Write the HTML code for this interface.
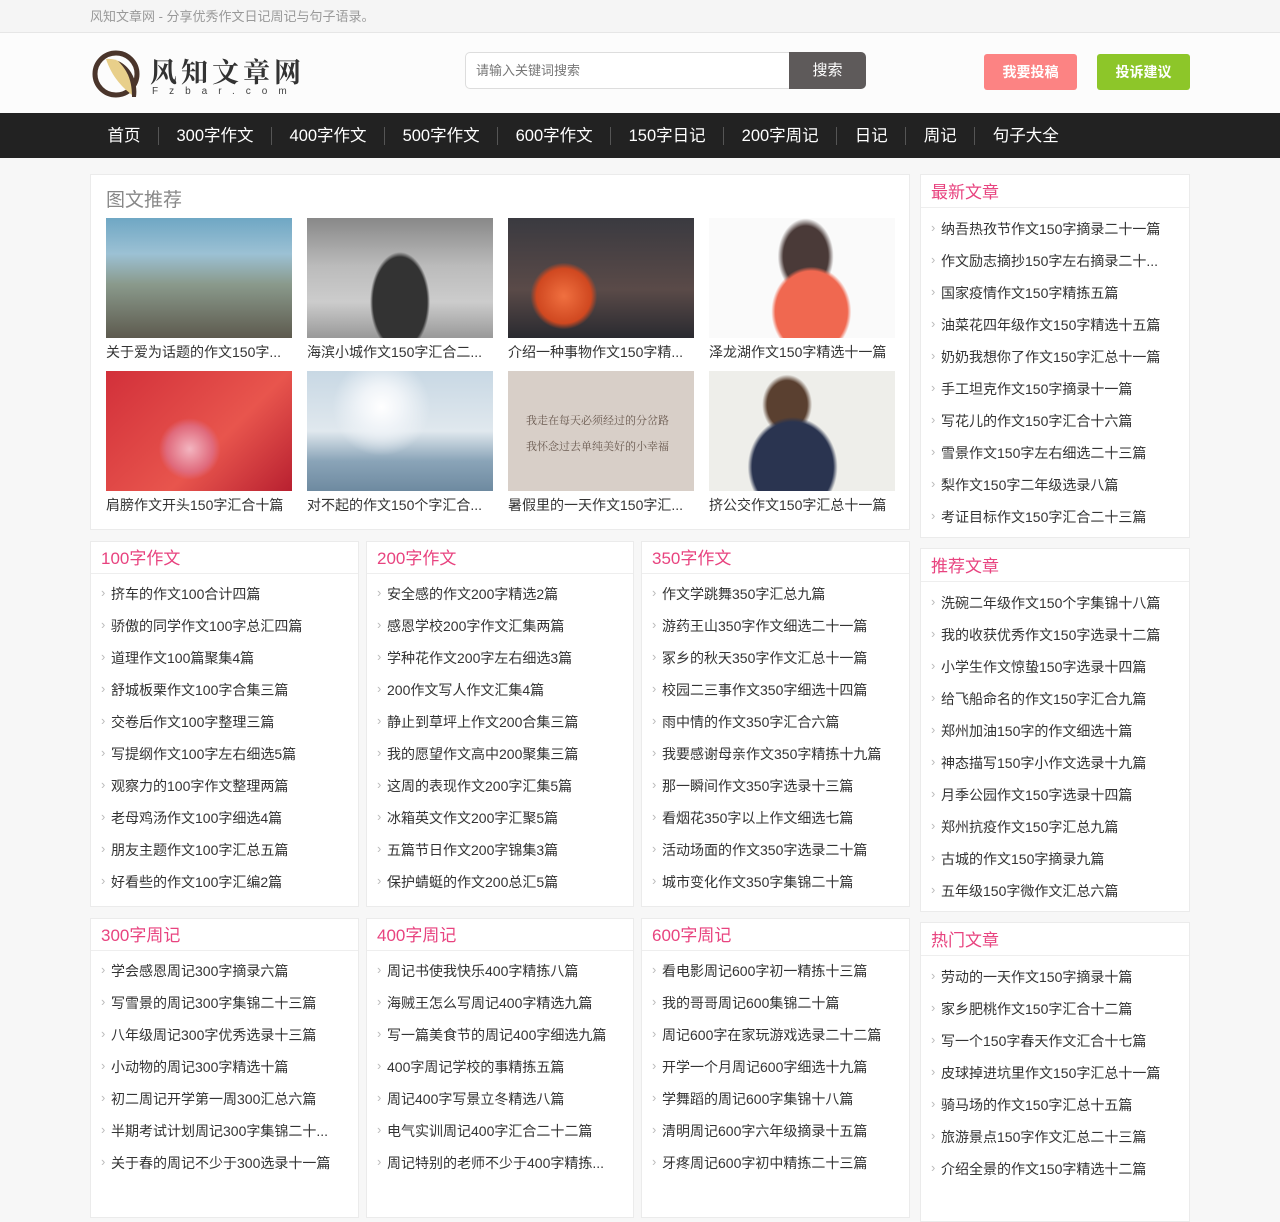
<!DOCTYPE html>
<html><head><meta charset="utf-8">
<style>
*{margin:0;padding:0;box-sizing:border-box}
body{width:1280px;height:1167px;overflow:hidden;background:#f7f7f7;font-family:"Liberation Sans","Noto Sans CJK SC",sans-serif;color:#333}
.top{height:33px;background:#f5f5f5;border-bottom:1px solid #e6e6e6;font-size:13px;color:#999;line-height:33px;padding-left:90px}
.hd{height:80px;background:#fcfcfc;position:relative}
.logo{position:absolute;left:92px;top:14px}
.logo .t{position:absolute;left:58px;top:4px;font-family:"Noto Serif CJK SC",serif;font-size:27px;font-weight:700;color:#333;letter-spacing:4px;white-space:nowrap}
.logo .u{position:absolute;left:60px;top:39px;font-size:10px;letter-spacing:11px;color:#444;white-space:nowrap}
.search{position:absolute;left:465px;top:19px;width:401px;height:37px;border:1px solid #ddd;border-radius:5px;background:#fff;font-size:13px;color:#777;line-height:36px;padding-left:10px}
.search b{position:absolute;right:-1px;top:-1px;width:77px;height:37px;background:#5e5a5a;color:#fff;font-weight:normal;font-size:15px;text-align:center;line-height:38px;border-radius:0 5px 5px 0}
.btn{position:absolute;top:21px;width:93px;height:36px;border-radius:3px;color:#fff;font-size:14px;font-weight:700;text-align:center;line-height:36px}
.nav{height:45px;background:#222;padding-left:90px;display:flex;align-items:center}
.nav a{color:#fff;font-size:16.5px;padding:0 17.5px;border-left:1px solid #555;line-height:18px}
.nav a:first-child{border:none}
.box{position:absolute;background:#fff;border:1px solid #ebebeb}
.box h3{font-weight:normal;font-size:17px;color:#e8437f;height:32px;line-height:33px;padding-left:10px;border-bottom:1px solid #eee}
.box ul{list-style:none;padding:4px 0 0 10px}
.box li{font-size:14px;height:32px;line-height:32px;white-space:nowrap;overflow:hidden;padding-left:10px;position:relative;color:#333}
.box li:before{content:"›";position:absolute;left:0;top:-1px;color:#bbb;font-size:13px}
.r h3{line-height:35px;height:33px}
.r ul{padding-top:5px}
.pic{position:absolute;width:186px}
.pic .i{width:186px;height:120px}
.pic p{font-size:14px;height:28px;line-height:28px;white-space:nowrap;overflow:hidden;text-overflow:ellipsis;color:#333}
</style></head><body>
<div class="top">风知文章网 - 分享优秀作文日记周记与句子语录。</div>
<div class="hd">
 <div class="logo">
  <svg width="54" height="54" viewBox="0 0 54 54"><circle cx="24" cy="27" r="21" fill="none" stroke="#4a352b" stroke-width="5"/><path d="M14 12 C34 10 44 30 40 48 C30 40 20 30 14 12Z" fill="#e8cf8a"/><path d="M26 14 C40 20 46 36 44 50 L40 50 C40 34 36 24 26 14Z" fill="#4a352b"/></svg>
  <div class="t">风知文章网</div><div class="u">Fzbar.com</div>
 </div>
 <div class="search">请输入关键词搜索<b>搜索</b></div>
 <div class="btn" style="left:984px;background:#fc8383">我要投稿</div>
 <div class="btn" style="left:1097px;background:#8dc629">投诉建议</div>
</div>
<div class="nav"><a>首页</a><a>300字作文</a><a>400字作文</a><a>500字作文</a><a>600字作文</a><a>150字日记</a><a>200字周记</a><a>日记</a><a>周记</a><a>句子大全</a></div>

<div class="box" style="left:90px;top:174px;width:820px;height:356px">
 <div style="font-size:19px;color:#888;position:absolute;left:15px;top:10px">图文推荐</div>
 <div class="pic" style="left:15px;top:43px"><div class="i" style="background:linear-gradient(180deg,#6fa7c4 0%,#9cc1d4 30%,#8a9a8c 55%,#5d5a4e 100%)"></div><p>关于爱为话题的作文150字...</p></div>
 <div class="pic" style="left:216px;top:43px"><div class="i" style="background:radial-gradient(ellipse 30px 50px at 50% 70%,#333 0,#333 90%,transparent 100%),linear-gradient(180deg,#888 0%,#bbb 40%,#ccc 70%,#999 100%)"></div><p>海滨小城作文150字汇合二...</p></div>
 <div class="pic" style="left:417px;top:43px"><div class="i" style="background:radial-gradient(circle at 30% 65%,#f07040 0,#d04820 18%,transparent 22%),linear-gradient(180deg,#3a3a40,#5a4a48 60%,#2a2a30)"></div><p>介绍一种事物作文150字精...</p></div>
 <div class="pic" style="left:618px;top:43px"><div class="i" style="background:radial-gradient(ellipse 40px 45px at 55% 78%,#f06850 0,#f06850 90%,transparent 100%),radial-gradient(ellipse 28px 38px at 52% 32%,#4a3a38 0,#4a3a38 80%,transparent 100%),#fafafa"></div><p>泽龙湖作文150字精选十一篇</p></div>
 <div class="pic" style="left:15px;top:196px"><div class="i" style="background:radial-gradient(circle at 45% 65%,#f3b5c0 0,#e06a7c 18%,transparent 24%),linear-gradient(135deg,#d2303a,#e8554d 60%,#b82030)"></div><p>肩膀作文开头150字汇合十篇</p></div>
 <div class="pic" style="left:216px;top:196px"><div class="i" style="background:radial-gradient(circle at 40% 30%,#fff 0,#f0f4f8 15%,transparent 35%),linear-gradient(180deg,#c8d8e4,#e0e8ee 50%,#8aa4b8 75%,#6e8aa0)"></div><p>对不起的作文150个字汇合...</p></div>
 <div class="pic" style="left:417px;top:196px"><div class="i" style="background:#d8cfc8;color:#6a5a50;font-size:11px;font-family:'Noto Serif CJK SC',serif;padding:36px 0 0 18px;line-height:26px">我走在每天必须经过的分岔路<br>我怀念过去单纯美好的小幸福</div><p>暑假里的一天作文150字汇...</p></div>
 <div class="pic" style="left:618px;top:196px"><div class="i" style="background:radial-gradient(ellipse 45px 50px at 45% 80%,#2a3450 0,#2a3450 90%,transparent 100%),radial-gradient(ellipse 25px 30px at 42% 28%,#5a4030 0,#5a4030 80%,transparent 100%),#eeeeea"></div><p>挤公交作文150字汇总十一篇</p></div>
</div>

<div class="box" style="left:90px;top:541px;width:269px;height:366px"><h3>100字作文</h3><ul><li>挤车的作文100合计四篇</li><li>骄傲的同学作文100字总汇四篇</li><li>道理作文100篇聚集4篇</li><li>舒城板栗作文100字合集三篇</li><li>交卷后作文100字整理三篇</li><li>写提纲作文100字左右细选5篇</li><li>观察力的100字作文整理两篇</li><li>老母鸡汤作文100字细选4篇</li><li>朋友主题作文100字汇总五篇</li><li>好看些的作文100字汇编2篇</li></ul></div>
<div class="box" style="left:366px;top:541px;width:268px;height:366px"><h3>200字作文</h3><ul><li>安全感的作文200字精选2篇</li><li>感恩学校200字作文汇集两篇</li><li>学种花作文200字左右细选3篇</li><li>200作文写人作文汇集4篇</li><li>静止到草坪上作文200合集三篇</li><li>我的愿望作文高中200聚集三篇</li><li>这周的表现作文200字汇集5篇</li><li>冰箱英文作文200字汇聚5篇</li><li>五篇节日作文200字锦集3篇</li><li>保护蜻蜓的作文200总汇5篇</li></ul></div>
<div class="box" style="left:641px;top:541px;width:269px;height:366px"><h3>350字作文</h3><ul><li>作文学跳舞350字汇总九篇</li><li>游药王山350字作文细选二十一篇</li><li>冢乡的秋天350字作文汇总十一篇</li><li>校园二三事作文350字细选十四篇</li><li>雨中情的作文350字汇合六篇</li><li>我要感谢母亲作文350字精拣十九篇</li><li>那一瞬间作文350字选录十三篇</li><li>看烟花350字以上作文细选七篇</li><li>活动场面的作文350字选录二十篇</li><li>城市变化作文350字集锦二十篇</li></ul></div>

<div class="box" style="left:90px;top:918px;width:269px;height:300px"><h3>300字周记</h3><ul><li>学会感恩周记300字摘录六篇</li><li>写雪景的周记300字集锦二十三篇</li><li>八年级周记300字优秀选录十三篇</li><li>小动物的周记300字精选十篇</li><li>初二周记开学第一周300汇总六篇</li><li>半期考试计划周记300字集锦二十...</li><li>关于春的周记不少于300选录十一篇</li></ul></div>
<div class="box" style="left:366px;top:918px;width:268px;height:300px"><h3>400字周记</h3><ul><li>周记书使我快乐400字精拣八篇</li><li>海贼王怎么写周记400字精选九篇</li><li>写一篇美食节的周记400字细选九篇</li><li>400字周记学校的事精拣五篇</li><li>周记400字写景立冬精选八篇</li><li>电气实训周记400字汇合二十二篇</li><li>周记特别的老师不少于400字精拣...</li></ul></div>
<div class="box" style="left:641px;top:918px;width:269px;height:300px"><h3>600字周记</h3><ul><li>看电影周记600字初一精拣十三篇</li><li>我的哥哥周记600集锦二十篇</li><li>周记600字在家玩游戏选录二十二篇</li><li>开学一个月周记600字细选十九篇</li><li>学舞蹈的周记600字集锦十八篇</li><li>清明周记600字六年级摘录十五篇</li><li>牙疼周记600字初中精拣二十三篇</li></ul></div>

<div class="box r" style="left:920px;top:174px;width:270px;height:364px"><h3>最新文章</h3><ul><li>纳吾热孜节作文150字摘录二十一篇</li><li>作文励志摘抄150字左右摘录二十...</li><li>国家疫情作文150字精拣五篇</li><li>油菜花四年级作文150字精选十五篇</li><li>奶奶我想你了作文150字汇总十一篇</li><li>手工坦克作文150字摘录十一篇</li><li>写花儿的作文150字汇合十六篇</li><li>雪景作文150字左右细选二十三篇</li><li>梨作文150字二年级选录八篇</li><li>考证目标作文150字汇合二十三篇</li></ul></div>
<div class="box r" style="left:920px;top:548px;width:270px;height:364px"><h3>推荐文章</h3><ul><li>洗碗二年级作文150个字集锦十八篇</li><li>我的收获优秀作文150字选录十二篇</li><li>小学生作文惊蛰150字选录十四篇</li><li>给飞船命名的作文150字汇合九篇</li><li>郑州加油150字的作文细选十篇</li><li>神态描写150字小作文选录十九篇</li><li>月季公园作文150字选录十四篇</li><li>郑州抗疫作文150字汇总九篇</li><li>古城的作文150字摘录九篇</li><li>五年级150字微作文汇总六篇</li></ul></div>
<div class="box r" style="left:920px;top:922px;width:270px;height:300px"><h3>热门文章</h3><ul><li>劳动的一天作文150字摘录十篇</li><li>家乡肥桃作文150字汇合十二篇</li><li>写一个150字春天作文汇合十七篇</li><li>皮球掉进坑里作文150字汇总十一篇</li><li>骑马场的作文150字汇总十五篇</li><li>旅游景点150字作文汇总二十三篇</li><li>介绍全景的作文150字精选十二篇</li></ul></div>
</body></html>
